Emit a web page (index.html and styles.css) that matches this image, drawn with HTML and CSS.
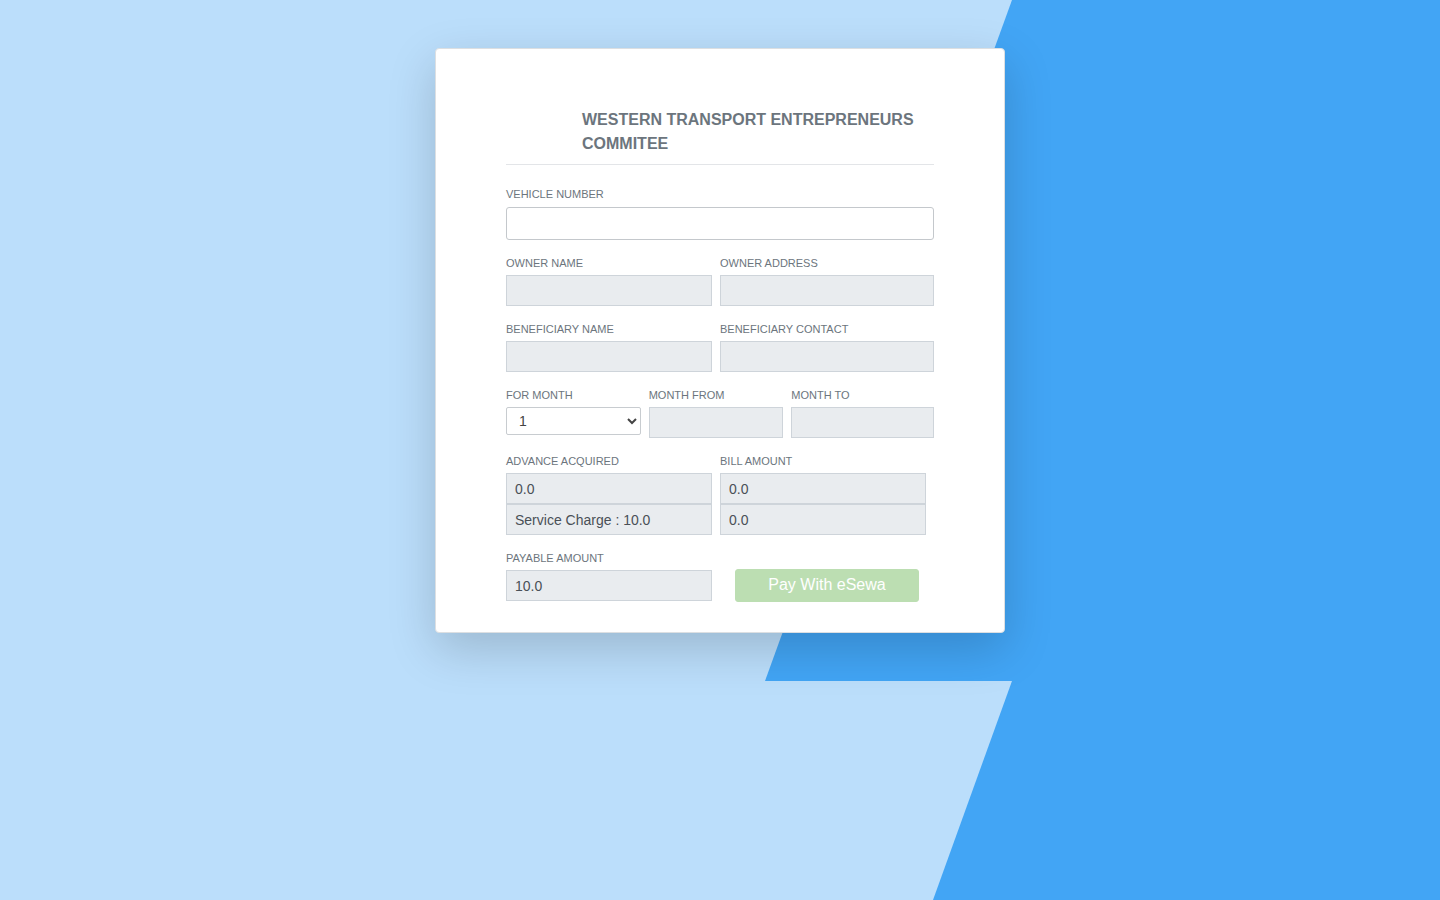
FILE: index.html
```html
<!DOCTYPE html>
<html lang="en">
<head>
<meta charset="utf-8">
<title>Western Transport Entrepreneurs Commitee</title>
<link rel="stylesheet" href="styles.css">
</head>
<body>
<div class="bg" aria-hidden="true">
  <div class="shape shape-top"></div>
  <div class="shape shape-bottom"></div>
</div>
<main class="page">
  <form class="card">
    <header class="card-head">
      <div class="logo-slot"></div>
      <h1 class="title">WESTERN TRANSPORT ENTREPRENEURS COMMITEE</h1>
    </header>
    <hr class="divider">

    <div class="group group-main">
      <label class="lbl">VEHICLE NUMBER</label>
      <input class="field field-main" type="text">
    </div>

    <div class="row two">
      <div class="group pad">
        <label class="lbl">OWNER NAME</label>
        <input class="field" type="text" disabled>
      </div>
      <div class="group">
        <label class="lbl">OWNER ADDRESS</label>
        <input class="field" type="text" disabled>
      </div>
    </div>

    <div class="row two">
      <div class="group pad">
        <label class="lbl">BENEFICIARY NAME</label>
        <input class="field" type="text" disabled>
      </div>
      <div class="group">
        <label class="lbl">BENEFICIARY CONTACT</label>
        <input class="field" type="text" disabled>
      </div>
    </div>

    <div class="row three">
      <div class="group pad">
        <label class="lbl">FOR MONTH</label>
        <select class="sel">
          <option>1</option><option>2</option><option>3</option>
        </select>
      </div>
      <div class="group pad">
        <label class="lbl">MONTH FROM</label>
        <input class="field" type="text" disabled>
      </div>
      <div class="group">
        <label class="lbl">MONTH TO</label>
        <input class="field" type="text" disabled>
      </div>
    </div>

    <div class="row two">
      <div class="group pad">
        <label class="lbl">ADVANCE ACQUIRED</label>
        <div class="stack">
          <input class="field" type="text" value="0.0" disabled>
          <input class="field" type="text" value="Service Charge : 10.0" disabled>
        </div>
      </div>
      <div class="group pad">
        <label class="lbl">BILL AMOUNT</label>
        <div class="stack">
          <input class="field" type="text" value="0.0" disabled>
          <input class="field" type="text" value="0.0" disabled>
        </div>
      </div>
    </div>

    <div class="row two last">
      <div class="group pad">
        <label class="lbl">PAYABLE AMOUNT</label>
        <input class="field" type="text" value="10.0" disabled>
      </div>
      <div class="btn-cell">
        <button class="pay" type="button" disabled>Pay With eSewa</button>
      </div>
    </div>
  </form>
</main>
</body>
</html>
```
FILE: styles.css
```css
* { box-sizing: border-box; }
html, body { margin: 0; padding: 0; }
body {
  width: 1440px;
  height: 900px;
  overflow: hidden;
  background: #bbdefb;
  font-family: "Liberation Sans", Arial, sans-serif;
  position: relative;
}
.bg { position: absolute; inset: 0; z-index: 0; }
.shape { position: absolute; left: 0; right: 0; background: #42a5f5; }
.shape-top {
  top: 0; height: 681px;
  clip-path: polygon(1012px 0, 1440px 0, 1440px 681px, 765px 681px);
}
.shape-bottom {
  top: 681px; height: 219px;
  clip-path: polygon(1012px 0, 1440px 0, 1440px 219px, 933px 219px);
}
.page {
  position: relative;
  z-index: 1;
  display: flex;
  justify-content: center;
  padding-top: 48px;
}
.card {
  width: 570px;
  background: #fff;
  border: 1px solid #dcdfe2;
  border-radius: 4px;
  padding: 59px 70px 30px;
  box-shadow: 0 16px 48px rgba(0, 0, 0, 0.175);
}
.card-head {
  display: grid;
  grid-template-columns: 76px 1fr;
}
.title {
  margin: 0;
  font-size: 16px;
  line-height: 24px;
  font-weight: bold;
  color: #6c757d;
}
.divider {
  border: 0;
  border-top: 1px solid #e3e5e8;
  margin: 8px 0 23px;
}
.group { display: flex; flex-direction: column; margin-bottom: 17px; }
.lbl {
  font-size: 11px;
  line-height: 12px;
  color: #6c757d;
  margin-bottom: 6px;
}
.group-main .lbl { margin-bottom: 7px; }
.row { display: grid; }
.row.two { grid-template-columns: 1fr 1fr; }
.row.three { grid-template-columns: 1fr 1fr 1fr; }
.pad { padding-right: 8px; }
.field {
  display: block;
  width: 100%;
  height: 31px;
  margin: 0;
  padding: 0 8px;
  font-family: "Liberation Sans", Arial, sans-serif;
  font-size: 14px;
  color: #495057;
  background: #e9ecef;
  border: 1px solid #ced4da;
  border-radius: 0;
  outline: none;
}
.field:disabled { opacity: 1; color: #495057; -webkit-text-fill-color: #495057; }
.field-main {
  height: 33px;
  background: #fff;
  border: 1px solid #c4c8cc;
  border-radius: 3px;
}
.sel {
  width: 100%;
  height: 28px;
  padding: 0 6px 0 8px;
  font-family: "Liberation Sans", Arial, sans-serif;
  font-size: 14px;
  color: #444;
  background: #fff;
  border: 1px solid #c8ccd0;
  border-radius: 2px;
}
.last .group { margin-bottom: 0; }
.btn-cell {
  display: flex;
  justify-content: center;
  padding-top: 17px;
}
.pay {
  width: 184px;
  height: 33px;
  background: #bcdeb2;
  border: 1px solid #bcdeb2;
  border-radius: 3px;
  color: #fff;
  font-family: "Liberation Sans", Arial, sans-serif;
  font-size: 16px;
  line-height: 1;
  padding: 0 0 2px;
}
```
